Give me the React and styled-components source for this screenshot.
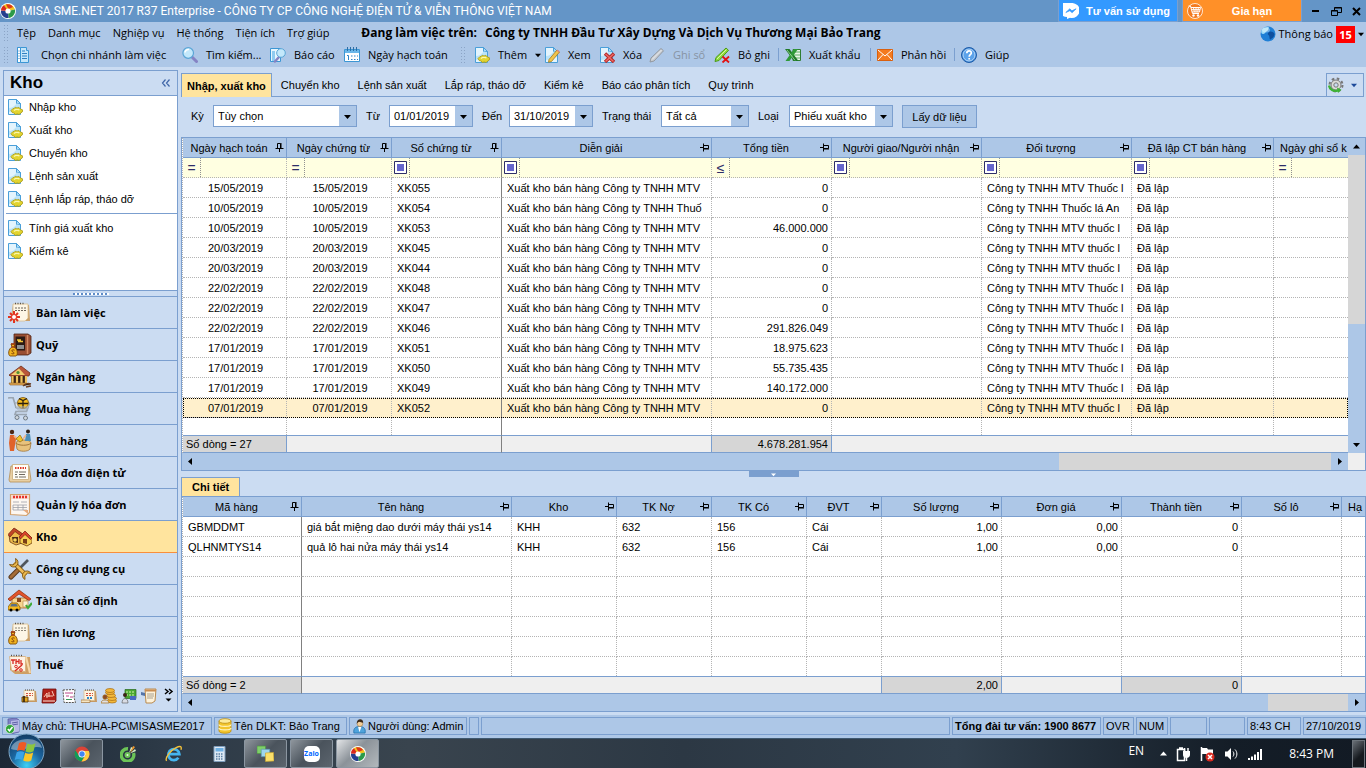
import React, { useState } from "react";
import styled, { createGlobalStyle } from "styled-components";

const colors = {
  title: "#6495c7",
  bar: "#adc7e7",
  panel: "#cbdcf2",
  line: "#7b9fcf",
  active: "#ffe49e",
  selected: "#fff0cc",
  filter: "#ffffe1",
  foot: "#efefef",
  footStrong: "#d6d6d6"
};

const uiFont = `"Open Sans", "Noto Sans", sans-serif`;
const gridFont = `"Liberation Sans", Arial, sans-serif`;

const GlobalStyle = createGlobalStyle`
  * {
    box-sizing: border-box;
  }
  body {
    margin: 0;
    background: ${colors.panel};
    color: #000;
    font-family: ${gridFont};
    font-size: 11px;
    line-height: 16px;
  }
  button, input, select {
    font: inherit;
    color: inherit;
    margin: 0;
    padding: 0;
    border: 0;
    border-radius: 0;
    background: none;
  }
  svg {
    display: block;
    flex: none;
  }
`;

const Page = styled.div`
  display: flex;
  flex-direction: column;
  min-height: 100vh;
  overflow: hidden;
`;

/* ---------- window chrome ---------- */

const TitleBar = styled.header`
  display: flex;
  align-items: center;
  height: 22px;
  background: ${colors.title};
  color: #fff;
`;
const TitleText = styled.h1`
  flex: 1;
  margin: 0 0 0 6px;
  font-family: Roboto, sans-serif;
  font-size: 12px;
  font-weight: 400;
  white-space: nowrap;
`;
const PromoButton = styled.button`
  display: flex;
  align-items: center;
  width: 120px;
  height: 22px;
  margin-right: 4px;
  padding-left: 4px;
  background: ${props => props.$color};
  border: 1px solid ${colors.line};
  border-top: 0;
  font-weight: 700;
  span {
    flex: 1;
    text-align: center;
    white-space: nowrap;
  }
`;
const WindowButtons = styled.div`
  display: flex;
  gap: 9px;
  padding: 0 4px 0 5px;
`;

const MenuBar = styled.nav`
  display: flex;
  align-items: center;
  height: 22px;
  padding-left: 3px;
  background: ${colors.bar};
  font-family: ${uiFont};
`;
const MenuButton = styled.button`
  margin-right: 12px;
  white-space: nowrap;
`;
const WorkingOn = styled.div`
  display: flex;
  flex: 1;
  gap: 8px;
  margin-left: 20px;
  font-size: 12px;
  font-weight: 700;
  white-space: nowrap;
`;
const Notice = styled.button`
  display: flex;
  align-items: center;
  gap: 3px;
  padding: 2px 2px 0 0;
`;
const Badge = styled.span`
  width: 19px;
  height: 17px;
  background: #f00;
  color: #fff;
  font-weight: 700;
  text-align: center;
  line-height: 17px;
`;

const ToolBar = styled.div`
  display: flex;
  align-items: center;
  height: 23px;
  padding: 0 0 2px 3px;
  background: ${colors.bar};
  font-family: ${uiFont};
`;
const Grip = styled.i`
  width: 6px;
  height: 18px;
  margin-right: 8px;
  background: radial-gradient(circle, #8ba4c6 1px, transparent 1px) 0 0 / 3px 3px;
`;
const ToolButton = styled.button`
  display: flex;
  align-items: center;
  gap: 8px;
  min-width: ${props => props.$width}px;
  color: ${props => (props.disabled ? "#8793a3" : "#000")};
  white-space: nowrap;
`;
const ToolDivider = styled.i`
  width: 1px;
  height: 13px;
  margin-right: 6px;
  background: ${colors.line};
`;

/* ---------- side bar ---------- */

const Workspace = styled.div`
  display: flex;
  flex: 1;
  gap: 3px;
  padding: 3px 0 3px 3px;
`;
const SideBar = styled.aside`
  display: flex;
  flex: none;
  flex-direction: column;
  width: 175px;
  border: 1px solid ${colors.line};
`;
const SideHeader = styled.div`
  display: flex;
  align-items: center;
  justify-content: space-between;
  height: 25px;
  padding: 0 6px;
  border-bottom: 1px solid ${colors.line};
  h2 {
    margin: 0;
    font-size: 17px;
  }
`;
const SideList = styled.div`
  flex: 1;
  background: #fff;
`;
const SideGroup = styled.ul`
  margin: 0 0 0 2px;
  padding: 0 0 2px;
  list-style: none;
  & + & {
    padding-top: 3px;
    border-top: 1px solid ${colors.line};
  }
`;
const SideLink = styled.a`
  display: flex;
  align-items: center;
  gap: 6px;
  height: 23px;
  padding: 0 0 1px 1px;
  color: #000;
  text-decoration: none;
`;
const SideSplitter = styled.div`
  display: flex;
  justify-content: center;
  align-items: center;
  height: 7px;
  border: solid ${colors.line};
  border-width: 1px 0;
  i {
    width: 36px;
    height: 2px;
    background: repeating-linear-gradient(90deg, #5f8cc8 0 2px, #fff 2px 4px);
  }
`;
const NavButton = styled.button`
  display: flex;
  align-items: center;
  gap: 4px;
  width: 100%;
  height: 32px;
  padding-left: 4px;
  border-bottom: 1px solid ${props => (props.$active ? "#f98f3c" : colors.line)};
  background: ${props => (props.$active ? colors.active : "transparent")};
  font-family: ${uiFont};
  font-weight: 700;
  white-space: nowrap;
`;
const NavTray = styled.div`
  display: flex;
  align-items: center;
  justify-content: flex-end;
  gap: 4px;
  height: 30px;
`;

/* ---------- content ---------- */

const Content = styled.main`
  display: flex;
  flex: 1;
  flex-direction: column;
  min-width: 0;
`;
const TabBar = styled.div`
  display: flex;
  margin-top: 3px;
  padding-right: 2px;
`;
const Tab = styled.button`
  height: 24px;
  padding: 0 ${props => (props.$active ? 5 : 9)}px;
  border: solid ${colors.line};
  border-width: ${props => (props.$active ? "1px 1px 0" : "0 0 1px")};
  background: ${props => (props.$active ? colors.active : "transparent")};
  font-weight: ${props => (props.$active ? 700 : 400)};
  white-space: nowrap;
`;
const TabFill = styled.div`
  flex: 1;
  border-bottom: 1px solid ${colors.line};
`;
const GearButton = styled.button`
  display: flex;
  align-items: center;
  gap: 7px;
  width: 38px;
  height: 24px;
  padding-left: 1px;
  border: 1px solid ${colors.line};
`;

const FilterBar = styled.form`
  display: flex;
  gap: 9px;
  height: 40px;
  padding: 8px 0 0 10px;
`;
const Field = styled.div`
  display: flex;
  align-items: center;
  height: 22px;
  label {
    width: ${props => props.$label}px;
    white-space: nowrap;
  }
`;
const Combo = styled.div`
  display: grid;
  grid-template-columns: 1fr 17px;
  width: ${props => props.$width}px;
  height: 22px;
  border: 1px solid ${colors.line};
  background: #fff;
  select,
  input {
    grid-area: 1 / 1 / 2 / 3;
    width: 100%;
    min-width: 0;
    padding: 0 18px 1px 4px;
    appearance: none;
  }
`;
const ComboArrow = styled.span`
  display: flex;
  grid-area: 1 / 2;
  align-items: center;
  justify-content: center;
  background: ${colors.bar};
  pointer-events: none;
`;
const LoadButton = styled.button`
  width: 75px;
  height: 23px;
  border: 1px solid ${colors.line};
  background: ${colors.bar};
`;

const GridPanel = styled.section`
  display: flex;
  flex-direction: column;
  border: 1px solid ${colors.line};
  background: #fff;
`;
const GridBody = styled.div`
  display: flex;
`;
const GridView = styled.div`
  flex: 1;
  min-width: 0;
  overflow: hidden;
`;
const Table = styled.table`
  width: 100%;
  table-layout: fixed;
  border-spacing: 0;
  border-left: 1px dotted #b4b4b4;
`;
const HeadCell = styled.th`
  height: 20px;
  padding: 0 2px 0 0;
  border: solid ${colors.line};
  border-width: 0 1px 1px 0;
  background: ${colors.bar};
  font-weight: 400;
  white-space: nowrap;
  overflow: hidden;
  &:last-child {
    padding: 0 0 0 6px;
    border-right: 0;
  }
  div {
    display: flex;
    align-items: center;
  }
  span {
    flex: 1;
    text-align: center;
  }
  &:last-child span {
    text-align: left;
  }
`;
const FilterCell = styled.td`
  height: 20px;
  padding: 0;
  border: dotted #b4b4b4;
  border-width: 0 1px 1px 0;
  background: ${colors.filter};
  ${props => props.$frozen && "border-right: 1px solid #808080;"}
  &:last-child {
    border-right: 0;
  }
  div {
    display: flex;
    height: 19px;
  }
  input {
    flex: 1;
    width: 0;
    padding: 0 3px;
  }
`;
const FilterOp = styled.span`
  display: flex;
  align-items: center;
  justify-content: center;
  width: 18px;
  border-right: 1px dotted #909090;
  color: #2d2d68;
  font-size: 14px;
`;
const Row = styled.tr`
  background: ${props => (props.$selected ? colors.selected : "#fff")};
  outline: ${props => (props.$selected ? "1px dotted #000" : "none")};
  outline-offset: -1px;
`;
const Cell = styled.td`
  height: ${props => props.$height || 20}px;
  padding: 0 3px 0 5px;
  border: dotted #b4b4b4;
  border-width: 0 1px ${props => (props.$height ? 0 : 1)}px 0;
  text-align: ${props => props.$align || "left"};
  white-space: nowrap;
  overflow: hidden;
  ${props => props.$frozen && "border-right: 1px solid #808080;"}
  &:last-child {
    border-right: 0;
  }
`;
const FootCell = styled.td`
  height: 18px;
  padding: 0 3px;
  border: solid ${colors.line};
  border-width: 1px 0;
  background: ${props => (props.$strong ? colors.footStrong : colors.foot)};
  text-align: ${props => props.$align || "left"};
  line-height: 14px;
  white-space: nowrap;
  ${props => props.$ruled && `border-right: 1px solid ${colors.line};`}
  ${props => props.$frozen && "border-right: 1px solid #808080;"}
`;
const ScrollButton = styled.button`
  display: flex;
  flex: none;
  align-items: center;
  justify-content: center;
  width: 17px;
  height: 17px;
  background: ${colors.bar};
`;
const VScroll = styled.div`
  display: flex;
  flex-direction: column;
  width: 17px;
`;
const HScroll = styled.div`
  display: flex;
  height: 17px;
`;
const Thumb = styled.div`
  flex: ${props => props.$grow};
  background: ${colors.bar};
`;
const Track = styled.div`
  flex: ${props => props.$grow};
  background: ${colors.footStrong};
`;
const Corner = styled.div`
  width: 17px;
  background: ${colors.foot};
`;
const Splitter = styled.div`
  display: flex;
  justify-content: center;
  height: 6px;
  span {
    display: flex;
    align-items: center;
    justify-content: center;
    width: 50px;
    background: ${colors.line};
  }
`;
const DetailTab = styled.button`
  align-self: flex-start;
  height: 19px;
  padding: 0 10px;
  border: 1px solid ${colors.line};
  border-bottom: 0;
  background: ${colors.active};
  font-weight: 700;
`;

/* ---------- status bar and task bar ---------- */

const StatusBar = styled.footer`
  display: flex;
  gap: 2px;
  height: 24px;
  padding: 2px 0 3px 2px;
  background: ${colors.bar};
  border-bottom: 1px solid #3e5870;
`;
const StatusCell = styled.div`
  display: flex;
  flex: ${props => (props.$width ? "none" : 1)};
  align-items: center;
  gap: 1px;
  width: ${props => props.$width}px;
  padding-left: 2px;
  border: 1px solid ${colors.line};
  font-weight: ${props => (props.$bold ? 700 : 400)};
  white-space: nowrap;
`;

const TaskBar = styled.div`
  display: flex;
  gap: 3px;
  height: 29px;
  padding-left: 8px;
  background: linear-gradient(90deg, #1c2836, #2d3a47 12%, #39444e 30%, #2c3844 50%, #31404e 70%, #141d27 90%, #121a24);
  color: #fff;
  font-family: ${uiFont};
`;
const StartButton = styled.button`
  align-self: flex-end;
  width: 49px;
`;
const TaskButton = styled.button`
  display: flex;
  align-items: center;
  justify-content: center;
  width: 43px;
  height: 29px;
  border: 1px solid ${props => (props.$open ? "#8b96a1" : "transparent")};
  border-radius: 2px;
  background: ${props =>
    props.$current
      ? "linear-gradient(135deg, #e2e4e6, #8b9299 45%, #b3b8bc)"
      : props.$open
      ? "linear-gradient(135deg, #8f969d, #4a535c 50%, #5c656e)"
      : "none"};
`;
const Tray = styled.div`
  display: flex;
  flex: 1;
  align-items: center;
  justify-content: flex-end;
  gap: 8px;
  padding-right: 1px;
`;
const Language = styled.span`
  margin-right: 8px;
  padding-bottom: 5px;
  font-size: 12px;
`;
const Clock = styled.time`
  margin: 0 10px 0 18px;
  font-size: 12px;
  white-space: nowrap;
`;
const ShowDesktop = styled.button`
  width: 13px;
  height: 28px;
  border: 1px solid #6d747b;
  background: linear-gradient(135deg, #6a7077, #15191e 60%);
`;

/* ---------- icons ---------- */

const Svg = ({ size = 16, box = 16, children }) => (
  <svg width={size} height={size} viewBox={`0 0 ${box} ${box}`} aria-hidden="true">
    {children}
  </svg>
);

const arrows = {
  down: "M0 2h7l-3.500 4z",
  up: "M0 5.500h7l-3.500-4z",
  left: "M5 0v7l-4-3.500z",
  right: "M2 0v7l4-3.500z"
};
const Arrow = ({ to = "down", size = 7, fill = "#000" }) => (
  <svg width={size} height={size} viewBox="0 0 7 7" aria-hidden="true">
    <path d={arrows[to]} fill={fill} />
  </svg>
);

const Pin = ({ frozen }) => (
  <svg width="9" height="9" viewBox="0 0 9 9" aria-hidden="true">
    <g transform={frozen ? "translate(0 0)" : "rotate(90 4.5 4.5)"} fill="none" stroke="#000">
      <path d="M2.500 6V.5h3V6M.5 5.500h8M4.500 6v3" />
      <path d="M6 0v6" />
    </g>
  </svg>
);

const Paper = () => (
  <g>
    <path d="M1.500.5h8l4 4v11h-12z" fill="#e3f4fd" stroke="#4a9fd9" />
    <path d="M9.500.5v4h4z" fill="#a9dbf6" stroke="#4a9fd9" />
    <path d="M2 9c3 0 6-2 8-5l3 1v5c-4 0-7 3-11 3z" fill="#a8dcf6" opacity=".7" />
  </g>
);
const Logo = ({ size = 16 }) => (
  <Svg size={size}>
    <circle cx="8" cy="8" r="8" fill="#fff" />
    <path d="M8 8L3.500 2.500C7-.500 13 1 15 6.500z" fill="#f4c31c" />
    <path d="M8 8l7-1.500c.700 4-2 8-6.500 8.500z" fill="#2c9a49" />
    <path d="M8 8l.500 7C4 15.500.500 12 1 7.500z" fill="#243f8f" />
    <path d="M8 8L1 7.500C1 5 2 3.500 4 2.200z" fill="#d9291c" />
    <path d="M6 1.500C9 .500 12 2 13 4L8.500 6z" fill="#d9291c" opacity=".9" />
    <circle cx="8" cy="8" r="2.600" fill="#fff" />
  </Svg>
);
const Messenger = () => (
  <Svg>
    <path d="M8 0a8 7.500 0 1 0-4 14v2l3-1.200A8 7.500 0 1 0 8 0z" fill="#fff" />
    <path d="M2.800 9.500L6.800 5.800l2.100 2 4.200-2-4 3.900-2.200-2z" fill="#3399ff" stroke="#3399ff" strokeWidth=".7" />
  </Svg>
);
const Cart = () => (
  <Svg>
    <circle cx="8" cy="8" r="7.500" fill="#f47a1e" stroke="#fff" strokeWidth=".8" />
    <path d="M1.500 3h2l2 7.500H12M4 4.500h9.500L12.500 9H5M6.500 4.500l.8 4.500M9 4.500V9M11.300 4.500L10.800 9M4.300 6.700H13" fill="none" stroke="#fff" />
    <circle cx="6.500" cy="12.500" r="1.200" fill="#fff" />
    <circle cx="11" cy="12.500" r="1.200" fill="#fff" />
  </Svg>
);
const Globe = () => (
  <Svg>
    <circle cx="8" cy="8" r="7.500" fill="#1f7fd6" />
    <path d="M2 3.500C4 1 8 .500 9 1.500 8 3 9 4 7 5S5 8 3 8 .800 5 2 3.500z" fill="#9fdcf7" />
    <path d="M9 6c2-1 5 0 5.500 2 0 3-3 5-4.500 5.500C9 12 10 10 8.500 9S8 7 9 6z" fill="#0d4f9f" />
    <ellipse cx="6" cy="4" rx="4" ry="2.500" fill="#fff" opacity=".35" />
  </Svg>
);
const BranchIcon = () => (
  <Svg>
    <path d="M.5.5h9v3h2v12H.5z" fill="#c4e6fa" stroke="#3c96d4" />
    <path d="M.5.5h3v15h-3z" fill="#fff" stroke="#3c96d4" />
    <path d="M5 4h3M5 6.500h5M5 9h5M5 11.500h5M1.500 4h1M1.500 6.500h1M1.500 9h1M1.500 11.500h1" stroke="#2f7fc0" />
  </Svg>
);
const Magnifier = () => (
  <Svg>
    <path d="M10 10l4.500 4.500" stroke="#8583c4" strokeWidth="3" strokeLinecap="round" />
    <circle cx="6.200" cy="6" r="5.300" fill="#c3e8fb" stroke="#5aa5d6" strokeWidth="1.200" />
    <path d="M3 5.500A3.500 3.500 0 0 1 7 2.500" stroke="#fff" strokeWidth="1.600" fill="none" />
  </Svg>
);
const ReportIcon = () => (
  <Svg>
    <path d="M.5 1.500h10v13H.5z" fill="#e6f5fd" stroke="#3c96d4" />
    <path d="M2 4h3v10H2z" fill="#8fcbf0" />
    <path d="M9 10l-4 4.500" stroke="#8583c4" strokeWidth="2.500" strokeLinecap="round" />
    <circle cx="11" cy="6" r="4.300" fill="#c3e8fb" stroke="#5aa5d6" />
  </Svg>
);
const CalendarIcon = () => (
  <Svg>
    <path d="M.5 2.500h15v12H.5z" fill="#fff" stroke="#3c96d4" />
    <path d="M1 3h14v3H1z" fill="#6ab7ea" />
    <path d="M3.500 0v4M6.500 0v4M9.500 0v4M12.500 0v4" stroke="#2c6ea6" />
    <path d="M3 8.500h1.500V13M7 9h1.500M10 9h1.500M13 9h1M7 12.500h1.500M10 12.500h1.500M13 12.500h1" fill="none" stroke="#2f83c8" />
  </Svg>
);
const AddDoc = () => (
  <Svg>
    <Paper />
    <path d="M4 11.500l2-2 1 .200 1.200-1.500L10 9l1.800-.700L13.500 10l2.300 1-.600 2-1.500 1-1.500 1.500-2-.500-2 .500-1-1.500-2-.500z" fill="#e2d42f" stroke="#a99712" strokeWidth=".8" />
    <path d="M7 11.500c1-1.200 4-1.500 5.500-.5" stroke="#fbf7ae" strokeWidth="1.300" fill="none" />
  </Svg>
);
const EditDoc = () => (
  <Svg>
    <Paper />
    <path d="M5 12.500L13 3l2.500 2-8 9.500-3 .8z" fill="#f1c44b" stroke="#a67a1c" strokeWidth=".8" />
    <path d="M12.500 3.600l2.300 2 .8-1-2-1.800z" fill="#e0837c" />
  </Svg>
);
const DeleteDoc = () => (
  <Svg>
    <Paper />
    <path d="M6 6.500l9 8.500M15 6.500l-9 8.500" stroke="#b32a2a" strokeWidth="3.400" />
    <path d="M6.500 7l8 7.500M14.500 7l-8 7.500" stroke="#ee6b66" strokeWidth="1.400" />
  </Svg>
);
const GreyPen = () => (
  <Svg>
    <path d="M1 15l1-4L12 1.500l2.500 2.300L5 14z" fill="#c9cdd2" stroke="#9298a0" />
    <path d="M3 12.500L12.500 3" stroke="#e9ebee" />
  </Svg>
);
const GreenPen = () => (
  <Svg>
    <path d="M1 14.500l1-4L12 1l2.500 2.300L5 13.500z" fill="#8fdc3c" stroke="#4a9a17" />
    <path d="M3 12L12.500 2.500" stroke="#d6f7a6" />
    <path d="M8.500 9.500l6.500 6M15 9.500l-6.500 6" stroke="#e11212" strokeWidth="1.800" />
  </Svg>
);
const ExcelIcon = () => (
  <Svg>
    <path d="M8 2.500h7.500v11H8z" fill="#e9f5e9" stroke="#2f7d33" />
    <path d="M9 5h6M9 8h6M9 11h6" stroke="#5fae62" />
    <path d="M0 2h4.500l9 12H9z" fill="#1f7a27" />
    <path d="M9 2h4L4.500 14H.5z" fill="#2f9a38" />
    <path d="M2 3l8 10.300" stroke="#a9dcaa" strokeWidth=".8" />
  </Svg>
);
const MailIcon = () => (
  <Svg>
    <path d="M.5 2.500h15v11H.5z" fill="#f47b20" stroke="#d9600f" />
    <path d="M1 3l7 6 7-6M1 13l5-5.500M15 13l-5-5.500" fill="none" stroke="#fff" />
  </Svg>
);
const HelpIcon = () => (
  <Svg>
    <circle cx="8" cy="8" r="7.500" fill="#3b86d6" stroke="#1e5ca8" />
    <circle cx="8" cy="8" r="6" fill="#5ba2ea" stroke="#cfe4f9" strokeWidth=".8" />
    <path d="M5.800 6.300C5.800 3 10.500 3.200 10.300 6 10.200 7.700 8.200 7.700 8.200 9.700M8.200 11v1.500" fill="none" stroke="#fff" strokeWidth="1.700" />
  </Svg>
);
const GearIcon = () => (
  <Svg>
    <circle cx="8" cy="8" r="6.500" fill="none" stroke="#777" strokeWidth="2" strokeDasharray="2.600 2.500" />
    <circle cx="8" cy="8" r="5" fill="#dcdcd8" stroke="#777" />
    <circle cx="8" cy="8" r="2.200" fill="#cbdcf2" stroke="#777" />
    <path d="M1 8.500c.500 4 4.500 6.500 9 5" fill="none" stroke="#3fb336" strokeWidth="2.200" />
    <path d="M9 10.500l4.500 2.200L10 16z" fill="#3fb336" />
  </Svg>
);

/* big navigation pictures share one 24px calendar sheet */
const Sheet = ({ x = 4, mark = "#6c655a" }) => (
  <g>
    <path d={`M${x} 4h16l1 16h-15l-4-4z`} fill="#caa06a" />
    <path d={`M${x} 3h15v14l-3 3H${x}z`} fill="#fdf6e6" stroke="#d9bd8c" strokeWidth=".8" />
    <path d={`M${x + 2} 7h11M${x + 2} 9.500h11`} stroke={mark} strokeDasharray="2 1" />
    <path d={`M${x + 2} 2.500h10`} stroke="#5b5247" strokeWidth="1.300" strokeDasharray="1 1.500" />
  </g>
);
const MoneyBag = ({ x = 0, y = 10 }) => (
  <g transform={`translate(${x} ${y})`}>
    <path d="M3 1h4L6 4c4 2 4 8 2 9H2C0 12 0 6 4 4z" fill="#f0b21e" stroke="#7a4a08" strokeWidth=".9" />
    <path d="M3 1h4M3.500 4h3" stroke="#a33a12" strokeWidth="1.400" />
    <path d="M6.500 7.200C4 6 3 8 5 9s1 2.500-1.500 1.500" fill="none" stroke="#7a3a08" />
  </g>
);

const navPictures = {
  desk: (
    <g>
      <Sheet x={5} />
      <g stroke="#e2331e" strokeWidth="2">
        <path d="M6 10v12M0 16h12M2 12l8 8M10 12l-8 8" />
      </g>
      <circle cx="6" cy="16" r="2.500" fill="#fff" stroke="#e2331e" />
    </g>
  ),
  safe: (
    <g>
      <path d="M6 1h14l3 2v17l-3 2H6z" fill="#9a4f33" stroke="#4f2415" strokeWidth=".8" />
      <path d="M7.500 3.500H17v14H7.500z" fill="#2c1a14" />
      <path d="M19.500 2v19" stroke="#d48a63" strokeWidth="1.500" />
      <path d="M9 7h4M10 8.500h5" stroke="#f2c53a" strokeWidth="1.500" />
      <path d="M9 12h7v4H9z" fill="#8f8f8f" />
      <MoneyBag x={0} y={10} />
    </g>
  ),
  bank: (
    <g>
      <path d="M1 10L13 1l9 7-1 3H2z" fill="#b9563a" stroke="#70301b" strokeWidth=".8" />
      <path d="M3 10l8-6.500 6 6.500z" fill="#f2ce70" />
      <path d="M3 11h16v7H3z" fill="#3c2415" />
      <path d="M4.500 11v8M9 11v8M13.500 11v8M18 11v8" stroke="#f0c35f" strokeWidth="2.200" />
      <path d="M1 18h17l4 2H2z" fill="#e3ab55" stroke="#8f5a22" strokeWidth=".6" />
      <circle cx="10" cy="7.500" r="1.600" fill="#4f8f33" />
      <path d="M15 21c2-2 5-3 8-2M18 22l5-1" stroke="#6b3e22" strokeWidth="1.600" />
    </g>
  ),
  trolley: (
    <g>
      <path d="M0 1l5-.5 3 10h12l-1.500 4H8l-1 3h12" fill="none" stroke="#9aa5b1" strokeWidth="1.700" />
      <path d="M7 6h15l-2 5H8z" fill="#dfe5ea" stroke="#8793a0" strokeWidth=".7" />
      <circle cx="15" cy="6" r="5.500" fill="#f5bd22" stroke="#7c5407" strokeWidth=".8" />
      <path d="M11 1.500l4 2 4-2M15 3v8M10 6.500h10" stroke="#2b2010" strokeWidth="1.300" fill="none" />
      <path d="M8 10h13M9 12h11M10 14h9" stroke="#a9b4be" />
      <circle cx="9" cy="20.500" r="2" fill="#cfd7de" stroke="#6f7b87" />
      <circle cx="17.500" cy="21" r="2" fill="#cfd7de" stroke="#6f7b87" />
    </g>
  ),
  counter: (
    <g>
      <path d="M8 14c0-4 15-4 15 0l-1 6c-2 3-11 3-13 0z" fill="#e8c27c" stroke="#a2763a" strokeWidth=".8" />
      <path d="M8 14c2 3 13 3 15 0" fill="none" stroke="#a2763a" />
      <circle cx="4" cy="3" r="2.200" fill="#4b2715" />
      <path d="M2 6h4l2 4-2 12H2L1 14z" fill="#e0632b" />
      <path d="M6 7l5 4" stroke="#efb58c" strokeWidth="1.800" />
      <path d="M8 10l4-4 3 5-3 2z" fill="#f1c22a" stroke="#8e6c0b" strokeWidth=".7" />
      <circle cx="20" cy="2.500" r="2" fill="#2e2015" />
      <path d="M18 5h4l1 7h-6z" fill="#4b8fb8" />
      <path d="M18 6l-3 4" stroke="#efb58c" strokeWidth="1.500" />
    </g>
  ),
  einvoice: (
    <g>
      <path d="M1 19l2-14h18l2 14-1 2H2z" fill="#e8cfa3" stroke="#b68d52" strokeWidth=".8" />
      <path d="M4.500 3.500h16v15h-16z" fill="#fffdf6" stroke="#c9ac78" strokeWidth=".8" />
      <path d="M7 7h11" stroke="#e03a2a" strokeWidth="2" strokeDasharray="1.500 1" />
      <path d="M7 11h3M11 11h7M7 13.500h2M11 13.500h6M7 16h3M11 16h7" stroke="#6f6a60" />
    </g>
  ),
  invoice: (
    <g>
      <path d="M2.500 1.500h19v18l-3 3-16-1z" fill="#fdf7f1" stroke="#d2a06b" strokeWidth="1.200" />
      <path d="M3 2h18v4H3z" fill="#f7d9cf" />
      <path d="M5 4h14" stroke="#e5322a" strokeWidth="2.500" strokeDasharray="2 1" />
      <path d="M5 9h6M13 9h6M5 12h14M5 14.500h14M5 17h14M5 12v5M10 12v5M15 12v5" stroke="#9da0a8" strokeWidth=".8" />
      <path d="M15 17h5v4z" fill="#e5aa7c" />
    </g>
  ),
  warehouse: (
    <g>
      <path d="M1 10l6-6 7 5v9l-6 2-6-3z" fill="#eebb4b" stroke="#6e3a12" strokeWidth=".8" />
      <path d="M0 9.500L6 3l9 6-2 2-6-4.500L2 12z" fill="#c24526" stroke="#6e2110" strokeWidth=".7" />
      <path d="M4 12h6v6l-5-1z" fill="#4e2b14" />
      <path d="M12 12l5-5 7 6v5l-5 3-7-3z" fill="#f5cf52" stroke="#6e3a12" strokeWidth=".8" />
      <path d="M11 12l6-6 7 7-1.500 1.500-5.500-5-4.500 4.500z" fill="#d9452b" stroke="#7b2110" strokeWidth=".7" />
      <path d="M15 14h4v5l-4-1z" fill="#7a3f16" />
      <circle cx="7" cy="15" r="1.800" fill="#f8d65c" />
    </g>
  ),
  tools: (
    <g>
      <path d="M3 20l8-8" stroke="#5b3c20" strokeWidth="5" strokeLinecap="round" />
      <path d="M3 20l8-8" stroke="#a56d38" strokeWidth="3" strokeLinecap="round" />
      <path d="M12 11l8-8" stroke="#4f565e" strokeWidth="2.600" />
      <path d="M6 6l12 12" stroke="#7a5212" strokeWidth="4.500" />
      <path d="M6 6l12 12" stroke="#eebb55" strokeWidth="2.600" />
      <path d="M7.500 1.500a4.500 4.500 0 1 1-6 6l3.500 .500L8 5.500z" fill="#eab84c" stroke="#7a5212" strokeWidth=".9" />
      <path d="M17 22.500a4.500 4.500 0 1 1 6-6l-3.500-.500-2.700 2.700z" fill="#eab84c" stroke="#7a5212" strokeWidth=".9" />
    </g>
  ),
  asset: (
    <g>
      <path d="M4 9h15v10H4z" fill="#f6d58f" stroke="#a86d28" strokeWidth=".8" />
      <path d="M0 10L11 1l12 9-2 1.500L11 5 2 12z" fill="#e2542c" stroke="#97320f" strokeWidth=".8" />
      <path d="M9 9h4v4H9z" fill="#8d4a1c" />
      <path d="M15 12h5v6h-5z" fill="#fff2d0" stroke="#b47e3c" strokeWidth=".6" />
      <path d="M0 18l3-4h6l3 4v3H0z" fill="#f5b81d" stroke="#81570a" strokeWidth=".8" />
      <path d="M3.500 15h5l1.500 2.500H2z" fill="#5a6f86" />
      <circle cx="3" cy="21" r="1.500" />
      <circle cx="9" cy="21" r="1.500" />
      <path d="M18 16l2 3 4-5" stroke="#3faa36" strokeWidth="2.200" fill="none" />
    </g>
  ),
  salary: (
    <g>
      <Sheet x={5} mark="#8b8577" />
      <MoneyBag x={0} y={10} />
    </g>
  ),
  tax: (
    <g>
      <path d="M2 4h20l1 17H7l-5-4z" fill="#cfa065" />
      <path d="M1.500 3.500h16v15l-14-1z" fill="#fdf2e4" stroke="#d6ad78" strokeWidth=".8" />
      <path d="M3 2.500h12" stroke="#5b5247" strokeWidth="1.300" strokeDasharray="1 1.500" />
      <path d="M3 7h4M5 7v4M8 6v5M11 6v5M8 8.500h3M13 7v4h2" stroke="#d92a22" strokeWidth="1.300" fill="none" />
      <path d="M7 18l7-6" stroke="#d92a22" strokeWidth="1.500" />
      <circle cx="8" cy="13.500" r="1.300" fill="none" stroke="#d92a22" />
      <circle cx="13" cy="17" r="1.300" fill="none" stroke="#d92a22" />
      <path d="M18 4l4 16" stroke="#f6d8a9" strokeWidth="2" />
    </g>
  )
};

const MiniSheet = () => (
  <g>
    <path d="M3 3h12l1 11H5z" fill="#c79a63" />
    <path d="M3 2.500h10.500v10H3z" fill="#fdf4e2" stroke="#d9bd8c" strokeWidth=".7" />
    <path d="M4 2h9" stroke="#4c443a" strokeDasharray="1 1" />
    <path d="M5 5.500h7M5 7.500h7" stroke="#d25540" strokeDasharray="2 1" />
  </g>
);
const trayPictures = [
  <g>
    <MiniSheet />
    <path d="M1 9h6v5H1z" fill="#e4a71f" stroke="#4c2d07" strokeWidth=".8" />
    <path d="M3 8v6" stroke="#2b1a06" strokeWidth="1.500" />
  </g>,
  <g>
    <path d="M2 1h13v12l-2 2H1z" fill="#b3211b" stroke="#6d100c" strokeWidth=".8" />
    <path d="M3 9l3-4v5M8 4v5M11 3l2 5M5 8h7" stroke="#f6c9b8" fill="none" />
    <path d="M2 13h12" stroke="#f5e9dc" />
  </g>,
  <g>
    <path d="M2 2l12-.5-1 8 1.500 5H3l-.5-6z" fill="#fff" stroke="#55504a" strokeDasharray="2 1" />
    <path d="M4 5h8M5 8h3M9 9h3" stroke="#b48" />
    <path d="M5 11.500h6" stroke="#3a9a5a" />
  </g>,
  <g>
    <MiniSheet />
    <path d="M0 12h9v2.500H0z" fill="#f7e7c4" stroke="#a3763c" strokeWidth=".7" />
    <path d="M6 10h6" stroke="#2f8ac8" strokeWidth="2" strokeDasharray="2 1" />
  </g>,
  <g fill="#f3b83a" stroke="#a66c12" strokeWidth=".7">
    <ellipse cx="11" cy="13" rx="4.500" ry="2" />
    <ellipse cx="11" cy="10.500" rx="4.500" ry="2" />
    <ellipse cx="10" cy="7.500" rx="4.500" ry="2" />
    <ellipse cx="9" cy="4.500" rx="4.500" ry="2" />
    <ellipse cx="9" cy="2.500" rx="4.500" ry="2" />
    <circle cx="4" cy="9" r="2.200" fill="#8d4a2a" />
    <path d="M0 15c0-4 8-4 8 0z" fill="#e0e0e4" />
  </g>,
  <g>
    <path d="M4 1.500h11v9H4z" fill="#49a832" stroke="#25681a" strokeWidth=".7" />
    <path d="M5 4h9M5 7h9" stroke="#d5f2a8" strokeDasharray="2 1" />
    <path d="M9 8h6v4H9z" fill="#4868c0" />
    <circle cx="4" cy="7" r="2" fill="#3b2517" />
    <path d="M1 15c0-6 6-6 6 0z" fill="#d9dce4" stroke="#555" strokeWidth=".6" />
  </g>,
  <g>
    <path d="M4 1h11l-1 12-3 2H5z" fill="#fdf2da" stroke="#b98a4e" />
    <path d="M4 1.500h11v2H4z" fill="#c98d51" />
    <path d="M6 6h7M6 8h7M6 10h6" stroke="#a9a090" />
    <path d="M0 4l4 1v3L0 7z" fill="#5474a8" />
  </g>
];

const ServerIcon = () => (
  <Svg>
    <path d="M3 1l8-1 3 2v12l-8 2-3-2z" fill="#8183c7" stroke="#55579a" strokeWidth=".7" />
    <path d="M6 3v12l8-1.500V2z" fill="#b8b9e6" />
    <path d="M7 5l6-1M7 7l6-1" stroke="#5c5ea4" />
    <circle cx="5" cy="11" r="4.500" fill="#2fa53b" stroke="#fff" strokeWidth=".6" />
    <path d="M2.800 11l1.700 1.800L7.500 9" stroke="#fff" strokeWidth="1.500" fill="none" />
  </Svg>
);
const DbIcon = () => (
  <Svg>
    <path d="M2 3v10c0 3 12 3 12 0V3z" fill="#f3c52c" stroke="#bb8d10" strokeWidth=".8" />
    <ellipse cx="8" cy="3" rx="6" ry="2.300" fill="#fdeb9b" stroke="#bb8d10" strokeWidth=".8" />
    <path d="M2 6.500c0 2.500 12 2.500 12 0M2 10c0 2.500 12 2.500 12 0" fill="none" stroke="#fff3bd" strokeWidth="1.300" />
  </Svg>
);
const UserIcon = () => (
  <Svg size={15}>
    <path d="M2 15c-1-6 3-7 6-7s7 1 6 7z" fill="#4fa3dc" stroke="#1f6ba5" strokeWidth=".8" />
    <path d="M6.500 8.500L8 14l2-5.500z" fill="#fff" />
    <circle cx="8.500" cy="5" r="3" fill="#f3cf9b" stroke="#a57a3c" strokeWidth=".6" />
    <path d="M5 5c0-6 7-6 7-1-2 0-3-1-4-1S6 4 5 5z" fill="#3b2a1a" />
  </Svg>
);

const Orb = () => (
  <svg width="37" height="35" viewBox="0 0 37 35" aria-hidden="true">
    <defs>
      <radialGradient id="orb" cx=".5" cy=".9" r=".9">
        <stop offset="0" stopColor="#3fd0f5" />
        <stop offset=".5" stopColor="#1b659f" />
        <stop offset="1" stopColor="#123a63" />
      </radialGradient>
    </defs>
    <circle cx="18.500" cy="18.500" r="17.500" fill="url(#orb)" stroke="#7fa7c7" />
    <path d="M3 16C4 4 32 2 34 15 26 11 12 20 3 16z" fill="#fff" opacity=".38" />
    <path d="M11 10c3-1.500 5-1.500 7.500 0L16.500 18c-2.500-1.500-5-1.500-7.500 0z" fill="#ee5a25" />
    <path d="M19.500 10.500c3 1.500 5 1.300 8-.3l-2 8c-3 1.600-5 1.600-8 .2z" fill="#8cc63f" />
    <path d="M8.700 19.300c2.500-1.500 5-1.500 7.500 0l-2 7.700c-2.500-1.500-5-1.500-7.500 0z" fill="#3ba3e8" />
    <path d="M17.200 19.800c2.500 1.500 5 1.400 8-.2l-2 7.800c-3 1.600-5.500 1.500-8 .1z" fill="#fcc626" />
  </svg>
);
const ChromeIcon = () => (
  <Svg>
    <circle cx="8" cy="8" r="7.500" fill="#db4437" />
    <path d="M1.500 4.300A7.500 7.500 0 0 0 7.500 15.500L11 9.500 5 10z" fill="#0f9d58" />
    <path d="M7.500 15.500A7.500 7.500 0 0 0 14.800 5H8l3.500 4.500z" fill="#ffcd40" />
    <circle cx="8" cy="8" r="3.500" fill="#fff" />
    <circle cx="8" cy="8" r="2.700" fill="#4285f4" />
  </Svg>
);
const CocCocIcon = () => (
  <Svg>
    <path d="M13.500 7A6.300 6.300 0 1 1 8 2.700" fill="none" stroke="#6cc457" strokeWidth="3.400" />
    <circle cx="7.500" cy="9" r="2" fill="#e8f6e0" stroke="#6cc457" strokeWidth="2" />
    <path d="M9 7l2-6 2 1zM10 7.500L15 3l1 2z" fill="#d7efc5" />
    <path d="M10 7.500L13 0l2 1z" fill="#f39b2d" />
  </Svg>
);
const IeIcon = () => (
  <Svg size={17}>
    <path d="M4.500 8.500h9A5.200 5.200 0 1 0 12.600 12" fill="none" stroke="#45b5ef" strokeWidth="2.600" />
    <path d="M1.500 15c-2-3 4-10 9-12.500 4-2 5.500-1 4.500 2" fill="none" stroke="#f5c23a" strokeWidth="1.300" />
  </Svg>
);
const CalculatorIcon = () => (
  <Svg>
    <path d="M2 .5h11v15H2z" fill="#dfeaf5" stroke="#7f9dbb" />
    <path d="M3.500 2h8v3.500h-8z" fill="#6fb1e4" />
    <path d="M4 8h7.500M4 10.500h7.500M4 13h7.500" stroke="#5a7fa3" strokeWidth="1.500" strokeDasharray="1.500 1" />
  </Svg>
);
const NotesIcon = () => (
  <Svg size={17}>
    <path d="M0 1h8v7H0z" fill="#7fcf6a" stroke="#4b9a3d" strokeWidth=".6" />
    <path d="M4 4h8v7H4z" fill="#9fd6ee" stroke="#5792ae" strokeWidth=".6" />
    <path d="M8 7.500l7.500-.500.500 8-8 .5z" fill="#fbe06a" stroke="#c9a52c" strokeWidth=".6" />
  </Svg>
);
const ZaloMark = styled.span`
  width: 16px;
  height: 16px;
  border-radius: 5px;
  background: #fff;
  color: #0068ff;
  font-size: 7px;
  font-weight: 700;
  line-height: 16px;
  text-align: center;
`;

/* ---------- data ---------- */

const menus = ["Tệp", "Danh mục", "Nghiệp vụ", "Hệ thống", "Tiện ích", "Trợ giúp"];

const tools = [
  { label: "Chọn chi nhánh làm việc", icon: <BranchIcon />, width: 165 },
  { label: "Tìm kiếm...", icon: <Magnifier />, width: 88 },
  { label: "Báo cáo", icon: <ReportIcon />, width: 74 },
  { label: "Ngày hạch toán", icon: <CalendarIcon />, width: 116, after: "grip" },
  { label: "Thêm", icon: <AddDoc />, width: 70, menu: true },
  { label: "Xem", icon: <EditDoc />, width: 55 },
  { label: "Xóa", icon: <DeleteDoc />, width: 50 },
  { label: "Ghi sổ", icon: <GreyPen />, width: 65, disabled: true },
  { label: "Bỏ ghi", icon: <GreenPen />, width: 64, after: "divider" },
  { label: "Xuất khẩu", icon: <ExcelIcon />, width: 85, after: "divider" },
  { label: "Phản hồi", icon: <MailIcon />, width: 77, after: "divider" },
  { label: "Giúp", icon: <HelpIcon />, width: 50 }
];

const sideGroups = [
  ["Nhập kho", "Xuất kho", "Chuyển kho", "Lệnh sản xuất", "Lệnh lắp ráp, tháo dỡ"],
  ["Tính giá xuất kho", "Kiểm kê"]
];

const navItems = [
  ["desk", "Bàn làm việc"],
  ["safe", "Quỹ"],
  ["bank", "Ngân hàng"],
  ["trolley", "Mua hàng"],
  ["counter", "Bán hàng"],
  ["einvoice", "Hóa đơn điện tử"],
  ["invoice", "Quản lý hóa đơn"],
  ["warehouse", "Kho"],
  ["tools", "Công cụ dụng cụ"],
  ["asset", "Tài sản cố định"],
  ["salary", "Tiền lương"],
  ["tax", "Thuế"]
];

const tabs = [
  "Nhập, xuất kho",
  "Chuyển kho",
  "Lệnh sản xuất",
  "Lắp ráp, tháo dỡ",
  "Kiểm kê",
  "Báo cáo phân tích",
  "Quy trình"
];

const voucherColumns = [
  { title: "Ngày hạch toán", width: 104, op: "=", pin: "frozen", align: "center" },
  { title: "Ngày chứng từ", width: 105, op: "=", pin: "frozen", align: "center" },
  { title: "Số chứng từ", width: 110, op: "box", pin: "frozen", frozen: true },
  { title: "Diễn giải", width: 210, op: "box", pin: "free" },
  { title: "Tổng tiền", width: 120, op: "≤", pin: "free", align: "right" },
  { title: "Người giao/Người nhận", width: 150, op: "box", pin: "free" },
  { title: "Đối tượng", width: 150, op: "box", pin: "free" },
  { title: "Đã lập CT bán hàng", width: 142, op: "box", pin: "free" },
  { title: "Ngày ghi sổ k", op: "=" }
];

const goods = "Xuất kho bán hàng Công ty TNHH MTV";
const vouchers = [
  ["15/05/2019", "XK055", goods, "0", "Công ty TNHH MTV Thuốc l"],
  ["10/05/2019", "XK054", "Xuất kho bán hàng Công ty TNHH Thuố", "0", "Công ty TNHH Thuốc lá An"],
  ["10/05/2019", "XK053", goods, "46.000.000", "Công ty TNHH MTV thuốc l"],
  ["20/03/2019", "XK045", goods, "0", "Công ty TNHH MTV thuốc l"],
  ["20/03/2019", "XK044", goods, "0", "Công ty TNHH MTV thuốc l"],
  ["22/02/2019", "XK048", goods, "0", "Công ty TNHH MTV Thuốc l"],
  ["22/02/2019", "XK047", goods, "0", "Công ty TNHH MTV Thuốc l"],
  ["22/02/2019", "XK046", goods, "291.826.049", "Công ty TNHH MTV Thuốc l"],
  ["17/01/2019", "XK051", goods, "18.975.623", "Công ty TNHH MTV Thuốc l"],
  ["17/01/2019", "XK050", goods, "55.735.435", "Công ty TNHH MTV Thuốc l"],
  ["17/01/2019", "XK049", goods, "140.172.000", "Công ty TNHH MTV Thuốc l"],
  ["07/01/2019", "XK052", goods, "0", "Công ty TNHH MTV thuốc l"]
];

const detailColumns = [
  { title: "Mã hàng", width: 119, pin: "frozen", frozen: true },
  { title: "Tên hàng", width: 210, pin: "free" },
  { title: "Kho", width: 105, pin: "free" },
  { title: "TK Nợ", width: 95, pin: "free" },
  { title: "TK Có", width: 95, pin: "free" },
  { title: "ĐVT", width: 75, pin: "free" },
  { title: "Số lượng", width: 120, pin: "free", align: "right" },
  { title: "Đơn giá", width: 120, pin: "free", align: "right" },
  { title: "Thành tiền", width: 120, pin: "free", align: "right" },
  { title: "Số lô", width: 100, pin: "free" },
  { title: "Hạ" }
];
const details = [
  ["GBMDDMT", "giá bắt miệng dao dưới máy thái ys14", "KHH", "632", "156", "Cái", "1,00", "0,00", "0", "", ""],
  ["QLHNMTYS14", "quả lô hai nửa máy thái ys14", "KHH", "632", "156", "Cái", "1,00", "0,00", "0", "", ""]
];

/* ---------- parts ---------- */

const ColumnHead = ({ columns }) => (
  <tr>
    {columns.map(column => (
      <HeadCell key={column.title} scope="col">
        <div>
          <span>{column.title}</span>
          {column.pin && <Pin frozen={column.pin === "frozen"} />}
        </div>
      </HeadCell>
    ))}
  </tr>
);

const Columns = ({ columns }) => (
  <colgroup>
    {columns.map(column => (
      <col key={column.title} width={column.width} />
    ))}
  </colgroup>
);

const GridRow = ({ columns, values, height, selected, onClick }) => (
  <Row $selected={selected} onClick={onClick}>
    {columns.map((column, i) => (
      <Cell key={column.title} $align={column.align} $frozen={column.frozen} $height={height}>
        {values[i]}
      </Cell>
    ))}
  </Row>
);

const SelectField = ({ id, label, labelWidth, width, value }) => (
  <Field $label={labelWidth}>
    <label htmlFor={id}>{label}</label>
    <Combo $width={width}>
      <select id={id} defaultValue={value}>
        <option>{value}</option>
      </select>
      <ComboArrow>
        <Arrow />
      </ComboArrow>
    </Combo>
  </Field>
);

const DateField = ({ id, label, labelWidth, value }) => (
  <Field $label={labelWidth}>
    <label htmlFor={id}>{label}</label>
    <Combo $width={84}>
      <input id={id} type="text" defaultValue={value} />
      <ComboArrow>
        <Arrow />
      </ComboArrow>
    </Combo>
  </Field>
);

function VoucherGrid() {
  const [selected, setSelected] = useState("XK052");

  return (
    <GridPanel>
      <GridBody>
        <GridView>
          <Table>
            <Columns columns={voucherColumns} />
            <thead>
              <ColumnHead columns={voucherColumns} />
            </thead>
            <tbody>
              <tr>
                {voucherColumns.map(column => (
                  <FilterCell key={column.title} $frozen={column.frozen}>
                    <div>
                      <FilterOp>
                        {column.op === "box" ? (
                          <Svg size={13} box={13}>
                            <path d="M.5.5h12v12H.5z" fill="#fff" stroke="#2d2d68" />
                            <path d="M3 3h7v7H3z" fill="#6464cc" />
                          </Svg>
                        ) : (
                          column.op
                        )}
                      </FilterOp>
                      <input type="text" aria-label={column.title} />
                    </div>
                  </FilterCell>
                ))}
              </tr>
              {vouchers.map(([date, number, note, total, partner]) => (
                <GridRow
                  key={number}
                  columns={voucherColumns}
                  values={[date, date, number, note, total, "", partner, "Đã lập", ""]}
                  selected={selected === number}
                  onClick={() => setSelected(number)}
                />
              ))}
              <GridRow columns={voucherColumns} values={[]} height={17} />
            </tbody>
            <tfoot>
              <tr>
                <FootCell $strong $ruled>
                  Số dòng = 27
                </FootCell>
                <FootCell colSpan={2} $frozen />
                <FootCell $ruled />
                <FootCell $strong $ruled $align="right">
                  4.678.281.954
                </FootCell>
                <FootCell colSpan={4} />
              </tr>
            </tfoot>
          </Table>
        </GridView>
        <VScroll>
          <ScrollButton aria-label="Lên">
            <Arrow to="up" />
          </ScrollButton>
          <Track $grow={169} />
          <Thumb $grow={112} />
          <ScrollButton aria-label="Xuống">
            <Arrow />
          </ScrollButton>
        </VScroll>
      </GridBody>
      <HScroll>
        <ScrollButton aria-label="Trái">
          <Arrow to="left" />
        </ScrollButton>
        <Thumb $grow={860} />
        <Track $grow={272} />
        <ScrollButton aria-label="Phải">
          <Arrow to="right" />
        </ScrollButton>
        <Corner />
      </HScroll>
    </GridPanel>
  );
}

function DetailGrid() {
  return (
    <GridPanel>
      <GridView>
        <Table>
          <Columns columns={detailColumns} />
          <thead>
            <ColumnHead columns={detailColumns} />
          </thead>
          <tbody>
            {details.map(values => (
              <GridRow key={values[0]} columns={detailColumns} values={values} />
            ))}
            {[1, 2, 3, 4, 5].map(n => (
              <GridRow key={n} columns={detailColumns} values={[]} />
            ))}
            <GridRow columns={detailColumns} values={[]} height={19} />
          </tbody>
          <tfoot>
            <tr>
              <FootCell $strong $frozen>
                Số dòng = 2
              </FootCell>
              <FootCell colSpan={5} $ruled />
              <FootCell $strong $ruled $align="right">
                2,00
              </FootCell>
              <FootCell $ruled />
              <FootCell $strong $ruled $align="right">
                0
              </FootCell>
              <FootCell colSpan={2} />
            </tr>
          </tfoot>
        </Table>
      </GridView>
      <HScroll>
        <ScrollButton aria-label="Trái">
          <Arrow to="left" />
        </ScrollButton>
        <Thumb $grow={1069} />
        <Track $grow={80} />
        <ScrollButton aria-label="Phải">
          <Arrow to="right" />
        </ScrollButton>
      </HScroll>
    </GridPanel>
  );
}

function Navigation() {
  const [current, setCurrent] = useState("Kho");

  return (
    <SideBar>
      <SideHeader>
        <h2>Kho</h2>
        <Svg size={10} box={10}>
          <path d="M4.500 1.500L1.500 5l3 3.500M8.500 1.500L5.500 5l3 3.500" fill="none" stroke="#3f66a8" strokeWidth="1.200" />
        </Svg>
      </SideHeader>
      <SideList>
        {sideGroups.map(group => (
          <SideGroup key={group[0]}>
            {group.map(label => (
              <li key={label}>
                <SideLink href="#">
                  <AddDoc />
                  {label}
                </SideLink>
              </li>
            ))}
          </SideGroup>
        ))}
      </SideList>
      <SideSplitter>
        <i />
      </SideSplitter>
      {navItems.map(([picture, label]) => (
        <NavButton key={label} $active={label === current} onClick={() => setCurrent(label)}>
          <Svg size={24} box={24}>
            {navPictures[picture]}
          </Svg>
          {label}
        </NavButton>
      ))}
      <NavTray>
        {trayPictures.map((picture, i) => (
          <Svg key={i}>{picture}</Svg>
        ))}
        <Svg>
          <path d="M4 1l3 2.500L4 6M8 1l3 2.500L8 6" fill="none" stroke="#000" strokeWidth="1.500" />
          <path d="M4.500 10.500h6l-3 3z" />
        </Svg>
      </NavTray>
    </SideBar>
  );
}

export default function App() {
  const [tab, setTab] = useState(tabs[0]);

  return (
    <Page>
      <GlobalStyle />
      <TitleBar>
        <Logo />
        <TitleText>
          MISA SME.NET 2017 R37 Enterprise - CÔNG TY CP CÔNG NGHỆ ĐIỆN TỬ &amp; VIỄN THÔNG VIỆT NAM
        </TitleText>
        <PromoButton $color="#3399ff">
          <Messenger />
          <span>Tư vấn sử dụng</span>
        </PromoButton>
        <PromoButton $color="#ff9028">
          <Cart />
          <span>Gia hạn</span>
        </PromoButton>
        <WindowButtons>
          <button aria-label="Thu nhỏ">
            <Svg size={11} box={11}>
              <path d="M1 5h7" stroke="#000" strokeWidth="2" />
            </Svg>
          </button>
          <button aria-label="Khôi phục">
            <Svg size={11} box={11}>
              <path d="M.5 4.500h6v5h-6zM3.500 4V1.500h7v5H7" fill="none" stroke="#000" />
              <path d="M.5 5h6M3.500 2h7" stroke="#000" />
            </Svg>
          </button>
          <button aria-label="Đóng">
            <Svg size={11} box={11}>
              <path d="M2 2l7 7M9 2L2 9" stroke="#000" strokeWidth="2" />
            </Svg>
          </button>
        </WindowButtons>
      </TitleBar>

      <MenuBar>
        <Grip />
        {menus.map(menu => (
          <MenuButton key={menu}>{menu}</MenuButton>
        ))}
        <WorkingOn>
          <span>Đang làm việc trên:</span>
          <span>Công ty TNHH Đầu Tư Xây Dựng Và Dịch Vụ Thương Mại Bảo Trang</span>
        </WorkingOn>
        <Notice>
          <Globe />
          Thông báo
          <Badge>15</Badge>
          <Arrow size={6} />
        </Notice>
      </MenuBar>

      <ToolBar>
        <Grip />
        {tools.map(tool => (
          <React.Fragment key={tool.label}>
            <ToolButton $width={tool.width} disabled={tool.disabled}>
              {tool.icon}
              {tool.label}
              {tool.menu && <Arrow size={6} />}
            </ToolButton>
            {tool.after === "grip" && <Grip />}
            {tool.after === "divider" && <ToolDivider />}
          </React.Fragment>
        ))}
      </ToolBar>

      <Workspace>
        <Navigation />
        <Content>
          <TabBar>
            {tabs.map(label => (
              <Tab key={label} $active={label === tab} onClick={() => setTab(label)}>
                {label}
              </Tab>
            ))}
            <TabFill />
            <GearButton aria-label="Tùy chọn hiển thị">
              <GearIcon />
              <Arrow size={6} fill="#1d4a9a" />
            </GearButton>
          </TabBar>
          <FilterBar onSubmit={event => event.preventDefault()}>
            <SelectField id="period" label="Kỳ" labelWidth={22} width={144} value="Tùy chọn" />
            <DateField id="from" label="Từ" labelWidth={23} value="01/01/2019" />
            <DateField id="to" label="Đến" labelWidth={27} value="31/10/2019" />
            <SelectField id="status" label="Trạng thái" labelWidth={59} width={88} value="Tất cả" />
            <SelectField id="kind" label="Loại" labelWidth={31} width={104} value="Phiếu xuất kho" />
            <LoadButton>Lấy dữ liệu</LoadButton>
          </FilterBar>
          <VoucherGrid />
          <Splitter>
            <span>
              <Arrow size={5} fill="#fff" />
            </span>
          </Splitter>
          <DetailTab>Chi tiết</DetailTab>
          <DetailGrid />
        </Content>
      </Workspace>

      <StatusBar>
        <StatusCell $width={210}>
          <ServerIcon />
          Máy chủ: THUHA-PC\MISASME2017
        </StatusCell>
        <StatusCell $width={133}>
          <DbIcon />
          Tên DLKT: Bảo Trang
        </StatusCell>
        <StatusCell $width={118}>
          <UserIcon />
          Người dùng: Admin
        </StatusCell>
        <StatusCell $width={10} />
        <StatusCell />
        <StatusCell $width={149} $bold>
          Tổng đài tư vấn: 1900 8677
        </StatusCell>
        <StatusCell $width={31}>OVR</StatusCell>
        <StatusCell $width={32}>NUM</StatusCell>
        <StatusCell $width={37} />
        <StatusCell $width={36} />
        <StatusCell $width={54}>8:43 CH</StatusCell>
        <StatusCell $width={63}>27/10/2019</StatusCell>
      </StatusBar>

      <TaskBar>
        <StartButton aria-label="Start">
          <Orb />
        </StartButton>
        <TaskButton $open aria-label="Chrome">
          <ChromeIcon />
        </TaskButton>
        <TaskButton aria-label="Cốc Cốc">
          <CocCocIcon />
        </TaskButton>
        <TaskButton aria-label="Internet Explorer">
          <IeIcon />
        </TaskButton>
        <TaskButton aria-label="Calculator">
          <CalculatorIcon />
        </TaskButton>
        <TaskButton $open aria-label="Sticky Notes">
          <NotesIcon />
        </TaskButton>
        <TaskButton $open>
          <ZaloMark>Zalo</ZaloMark>
        </TaskButton>
        <TaskButton $open $current aria-label="MISA">
          <Logo />
        </TaskButton>
        <Tray>
          <Language>EN</Language>
          <Arrow to="up" fill="#fff" />
          <Svg>
            <path d="M2.500 3.500h7v11h-7zM4 2h4" fill="none" stroke="#fff" strokeWidth="1.500" />
            <path d="M8 5h7v4c0 2-2 3-3.500 3S8 11 8 9z" fill="#fff" />
            <path d="M9.500 2v3M13 2v3M11.500 11v4" stroke="#fff" strokeWidth="1.500" />
          </Svg>
          <Svg>
            <path d="M2.500 1v14" stroke="#fff" strokeWidth="1.500" />
            <path d="M3 2h5l1 1.500h5V9H8L7 8H3z" fill="#fff" />
            <circle cx="11" cy="11" r="4.500" fill="#d8291f" />
            <path d="M9 9l4 4M13 9l-4 4" stroke="#fff" strokeWidth="1.500" />
          </Svg>
          <Svg>
            <path d="M2 5.500h2.500L8 2v12l-3.500-3.500H2z" fill="#fff" />
            <path d="M10 5.500c1.200 1.500 1.200 3.500 0 5M12 3.500c2.500 2.500 2.500 6.500 0 9" fill="none" stroke="#fff" />
          </Svg>
          <Svg>
            <path d="M1 12h2v2H1zM4 10.500h2V14H4zM7 8.500h2V14H7zM10 6h2v8h-2zM13 3h2v11h-2z" fill="#fff" />
          </Svg>
          <Clock>8:43 PM</Clock>
          <ShowDesktop aria-label="Show desktop" />
        </Tray>
      </TaskBar>
    </Page>
  );
}
